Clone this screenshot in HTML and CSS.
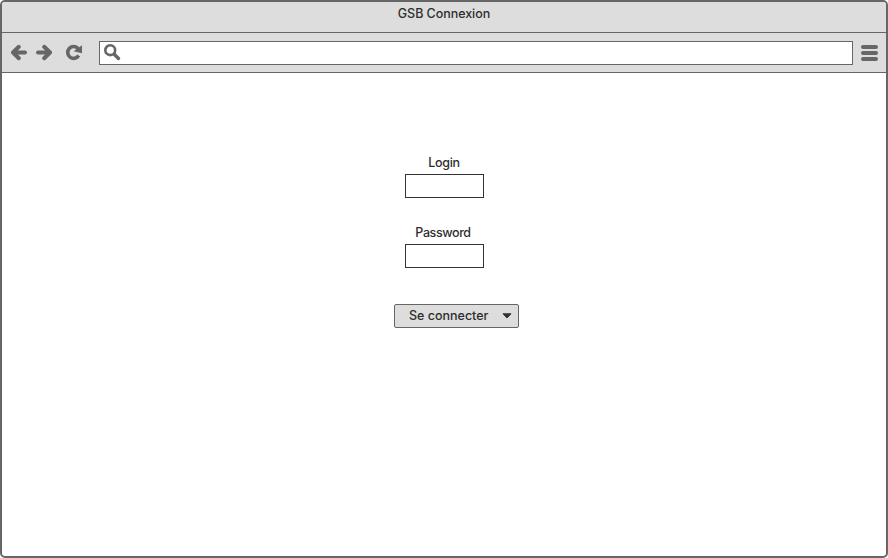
FILE: index.html
```
<!DOCTYPE html>
<html lang="fr">
<head>
<meta charset="utf-8">
<title>GSB Connexion</title>
<link rel="stylesheet" href="styles.css">
</head>
<body>
<div class="window">
  <header class="titlebar"><span class="title">GSB Connexion</span></header>
  <nav class="toolbar">
    <svg class="arrow" width="18" height="17" viewBox="0 0 18 17"><path d="M8.800 2.800 3 8.500l5.800 5.700M3.500 8.500H15"/></svg>
    <svg class="arrow forward" width="18" height="17" viewBox="0 0 18 17"><path d="M9.200 2.800 15 8.500l-5.800 5.700M14.500 8.500H3"/></svg>
    <svg class="reload" width="18" height="17" viewBox="0 0 18 17"><path class="ring" d="M13.200 4.700A5.900 5.900 0 1 0 13.700 11.500"/><path class="tip" d="M17 1.300v8L8.600 7.200z"/></svg>
    <div class="address">
      <svg width="18" height="18" viewBox="0 0 18 18"><circle cx="6.200" cy="6.200" r="4.900"/><path d="m10.200 10.200 4.300 4.200"/></svg>
    </div>
    <div class="menu"><i></i><i></i><i></i></div>
  </nav>
  <main class="page">
    <form class="login">
      <label class="name" for="login">Login</label>
      <input class="field" id="login" type="text">
      <label class="pass" for="password">Password</label>
      <input class="field" id="password" type="password">
    </form>
    <button class="submit" type="button"><span>Se connecter</span><svg width="10" height="6" viewBox="0 0 10 6"><path d="M1 .8h8L5 5z"/></svg></button>
  </main>
</div>
</body>
</html>
```
FILE: styles.css
```
* { box-sizing: border-box; }
body {
  margin: 0;
  background: #fff;
  color: #2d2d2d;
  font: 500 12.5px/16px Inter, Lato, sans-serif;
}
.window {
  width: 888px;
  height: 558px;
  border: 2px solid #666;
  border-radius: 5px;
  overflow: hidden;
  background: #fff;
}
.titlebar {
  height: 31px;
  padding-top: 4px;
  border-bottom: 1px solid #666;
  background: #ddd;
  text-align: center;
}
.title { letter-spacing: -.05px; }
.toolbar {
  display: flex;
  align-items: center;
  height: 40px;
  padding: 0 8px 0 8px;
  border-bottom: 1px solid #666;
  background: #ddd;
}
.arrow { fill: none; stroke: #666; stroke-width: 4; stroke-linecap: round; stroke-linejoin: round; }
.forward { margin-left: 7px; }
.reload { margin-left: 12px; }
.ring { fill: none; stroke: #666; stroke-width: 3.6; }
.tip { fill: #666; }
.address {
  flex: 1;
  height: 24px;
  margin: 0 8px 0 16px;
  padding: 2px 0 0 4px;
  border: 1px solid #666;
  background: #fff;
}
.address svg { display: block; fill: none; stroke: #666; stroke-width: 2.600; }
.address path { stroke-width: 3.500; stroke-linecap: round; }
.menu { display: flex; flex-direction: column; gap: 2px; width: 17.5px; }
.menu i { height: 4px; border-radius: 2px; background: #666; }
.page { padding: 82px 0 0 392px; }
.login {
  display: flex;
  flex-direction: column;
  align-items: center;
  width: 101px;
}
.login label { height: 19px; }
.field {
  width: 79px;
  height: 24px;
  margin: 0 0 27px;
  padding: 0 4px;
  border: 1px solid #333;
  border-radius: 0;
  background: #fff;
  outline: none;
}
.name { letter-spacing: -.3px; margin-right: 1px; }
.pass { letter-spacing: -.4px; margin-right: 3px; }
.submit {
  display: flex;
  align-items: center;
  justify-content: space-between;
  width: 125px;
  height: 24px;
  margin: 9px 0 0;
  padding: 0 6px 0 14px;
  border: 1px solid #666;
  border-radius: 2px;
  background: #ddd;
  color: #2d2d2d;
  font: inherit;
}
.submit svg { margin-bottom: 1px; fill: #333; stroke: #333; stroke-linejoin: round; }
```
